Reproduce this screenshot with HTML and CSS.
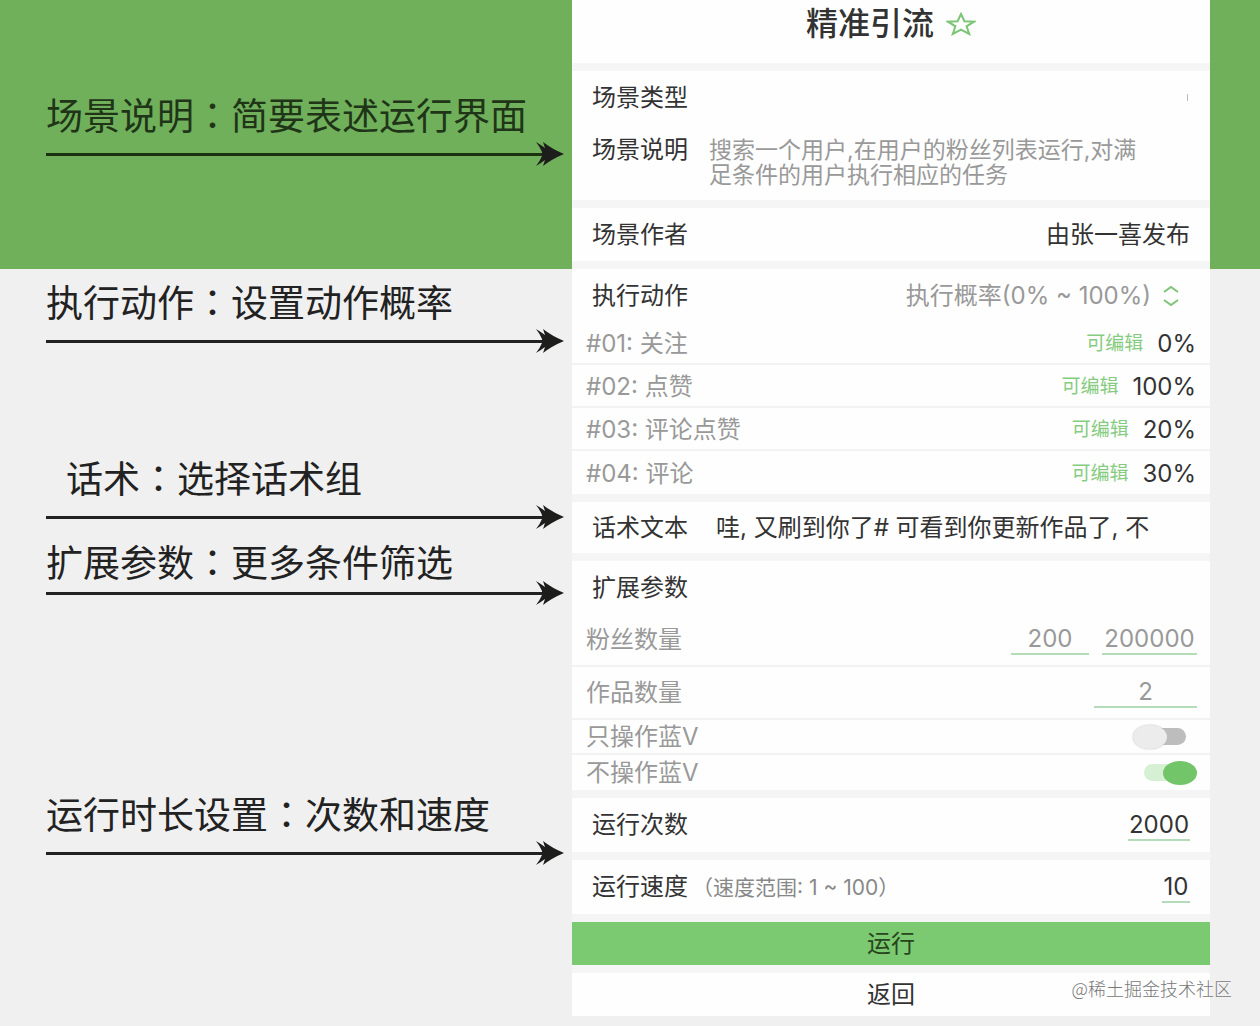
FILE: index.html
```html
<!DOCTYPE html>
<html lang="zh-CN">
<head>
<meta charset="utf-8">
<meta name="viewport" content="width=device-width, initial-scale=1">
<title>精准引流</title>
<link rel="stylesheet" href="styles.css">
</head>
<body>
<svg class="defs" aria-hidden="true">
  <symbol id="head" viewBox="0 0 28 24"><path d="M0 0 Q5 3 9 6 L7 0 Q16 7 28 12 Q16 17 7 24 L9 18 Q5 21 0 24 Q4 19 6 14 V10 Q4 5 0 0Z"/></symbol>
</svg>
<div class="stage">
  <aside class="notes">
    <section class="note note-scene">
      <h2>场景说明<span class="colon" lang="zh-TW">：</span>简要表述运行界面</h2>
      <div class="arrow"><span class="shaft"></span><svg class="head"><use href="#head"/></svg></div>
    </section>
    <section class="note note-action">
      <h2>执行动作<span class="colon" lang="zh-TW">：</span>设置动作概率</h2>
      <div class="arrow"><span class="shaft"></span><svg class="head"><use href="#head"/></svg></div>
    </section>
    <section class="note note-script">
      <h2>话术<span class="colon" lang="zh-TW">：</span>选择话术组</h2>
      <div class="arrow"><span class="shaft"></span><svg class="head"><use href="#head"/></svg></div>
    </section>
    <section class="note note-params">
      <h2>扩展参数<span class="colon" lang="zh-TW">：</span>更多条件筛选</h2>
      <div class="arrow"><span class="shaft"></span><svg class="head"><use href="#head"/></svg></div>
    </section>
    <section class="note note-run">
      <h2>运行时长设置<span class="colon" lang="zh-TW">：</span>次数和速度</h2>
      <div class="arrow"><span class="shaft"></span><svg class="head"><use href="#head"/></svg></div>
    </section>
  </aside>

  <main class="phone">
    <header class="card title">
      <h1>精准引流</h1>
      <svg class="star" viewBox="0 0 30 24"><path d="M15 2 L18.4 9.2 L28 9.7 L20.6 14.3 L23.2 22 L15 17.6 L6.8 22 L9.4 14.3 L2 9.7 L11.6 9.2Z"/></svg>
    </header>

    <section class="card">
      <div class="row"><span class="label">场景类型</span><span class="tick"></span></div>
      <div class="about"><span class="label">场景说明</span><p>搜索一个用户,在用户的粉丝列表运行,对满<br>足条件的用户执行相应的任务</p></div>
    </section>

    <section class="card row"><span class="label">场景作者</span><span class="label">由张一喜发布</span></section>

    <section class="card">
      <div class="row">
        <span class="label">执行动作</span>
        <span class="range">执行概率(0% ~ 100%)
          <svg class="sort" viewBox="0 0 16 20"><path d="M1 6 L8 1 L15 6 M1 14 L8 19 L15 14"/></svg>
        </span>
      </div>
      <ul class="actions">
        <li><span>#01: 关注</span><button type="button"><small>可编辑</small>0%</button></li>
        <li><span>#02: 点赞</span><button type="button"><small>可编辑</small>100%</button></li>
        <li><span>#03: 评论点赞</span><button type="button"><small>可编辑</small>20%</button></li>
        <li><span>#04: 评论</span><button type="button"><small>可编辑</small>30%</button></li>
      </ul>
    </section>

    <section class="card row script"><span class="label">话术文本</span><span class="script-text">哇, 又刷到你了# 可看到你更新作品了, 不</span></section>

    <section class="card">
      <div class="row"><span class="label">扩展参数</span></div>
      <div class="param"><label for="fans-min">粉丝数量</label>
        <span class="pair"><input class="num num-min" id="fans-min" value="200"><input class="num num-max" aria-label="粉丝数量上限" value="200000"></span></div>
      <div class="param"><label for="works">作品数量</label><input class="num num-works" id="works" value="2"></div>
      <div class="param param-switch"><label for="only-v">只操作蓝V</label><input class="switch" type="checkbox" id="only-v"></div>
      <div class="param param-switch"><label for="skip-v">不操作蓝V</label><input class="switch" type="checkbox" id="skip-v" checked></div>
    </section>

    <section class="card row tall"><label class="label" for="times">运行次数</label><input class="num num-times" id="times" value="2000"></section>
    <section class="card row tall"><label class="label" for="speed">运行速度<small class="hint">（速度范围: 1 ~ 100）</small></label><input class="num num-speed" id="speed" value="10"></section>

    <button type="button" class="wide run">运行</button>
    <button type="button" class="wide back">返回</button>
  </main>
  <div class="watermark">@稀土掘金技术社区</div>
</div>
</body>
</html>
```
FILE: styles.css
```css
* { box-sizing: border-box; }

body {
  margin: 0;
  font-family: "Noto Sans CJK SC", sans-serif;
  color: #222;
  background: #f0f0f0;
}

h1, h2, p, ul { margin: 0; padding: 0; }
button, input { font: inherit; color: inherit; border: 0; border-radius: 0; background: none; padding: 0; }
.defs { display: none; }

.stage {
  position: relative;
  display: grid;
  grid-template-columns: 572fr 638fr 50fr;
  min-height: 100vh;
  background: linear-gradient(#70b05b 269px, #f0f0f0 269px);
}

/* annotations */
.notes { padding: 96px 8px 0 46px; min-width: 0; }
.note h2 {
  font-size: 37px;
  line-height: 36px;
  font-weight: 400;
  white-space: nowrap;
}
.colon { font-family: "Noto Sans CJK TC", sans-serif; }
.arrow { display: flex; align-items: center; margin-top: 10px; }
.shaft { flex: 1; height: 3px; margin-right: -8px; background: #222; }
.head { width: 28px; height: 24px; fill: #1d1d1b; }
.note-scene h2 { color: #203518; }
.note-scene .shaft { background: #1c3012; }
.note-action { margin-top: 117px; }
.note-script { margin-top: 106px; }
.note-script h2 { padding-left: 20px; }
.note-params { margin-top: 14px; }
.note-params .arrow { margin-top: 2px; }
.note-run { margin-top: 190px; }

/* phone screen */
.phone {
  align-self: start;
  display: flex;
  flex-direction: column;
  gap: 8px;
  min-width: 0;
  background: #f5f5f5;
  font-family: Inter, "Noto Sans CJK SC", sans-serif;
  font-size: 24px;
  line-height: 24px;
  color: #333;
}
.card { background: #fefefe; }
.title {
  display: flex;
  justify-content: center;
  gap: 12px;
  height: 63px;
  padding-top: 8px;
}
.title h1 { font-size: 32px; line-height: 32px; font-weight: 500; }
.star { width: 30px; height: 24px; margin-top: 4px; fill: none; stroke: #7cc576; stroke-width: 2; }

.row {
  display: flex;
  align-items: center;
  justify-content: space-between;
  min-height: 53px;
  padding: 0 20px;
}
.tall { min-height: 54px; }
.label { white-space: nowrap; }
.tick { width: 1px; height: 7px; margin-right: 2px; background: #bbb; }
.about { display: flex; gap: 21px; padding: 14px 20px 12px; }
.about p { font-size: 23px; line-height: 25px; color: #999; white-space: nowrap; }
.range { display: flex; align-items: center; gap: 12px; padding-right: 11px; color: #999; }
.sort { width: 16px; height: 20px; fill: none; stroke: #7cc576; stroke-width: 2; }

.actions { list-style: none; color: #999; }
.actions li {
  display: flex;
  align-items: center;
  justify-content: space-between;
  height: 43px;
  padding: 2px 14px 0;
  border-bottom: 2px solid #f3f3f3;
}
.actions li:last-child { border-bottom: 0; }
.actions button { display: flex; align-items: center; gap: 14px; color: #333; }
.actions small { font-size: 19px; color: #86cc80; }

.script { min-height: 51px; justify-content: flex-start; gap: 28px; padding-right: 0; overflow: hidden; }
.script-text { white-space: nowrap; }

.param {
  display: flex;
  align-items: center;
  justify-content: space-between;
  height: 53px;
  padding: 0 13px 0 14px;
  color: #999;
  border-bottom: 2px solid #f1f3f1;
}
.param:last-child { border-bottom: 0; }
.param-switch { height: 35px; }
.pair { display: flex; gap: 13px; }
.num { height: 31px; text-align: center; border-bottom: 2px solid #b5dcb9; }
.num-min { width: 78px; }
.num-max { width: 95px; }
.num-works { width: 103px; }
.num-times { width: 62px; }
.num-speed { width: 28px; }
.hint { margin-left: 4px; font-size: 21px; color: #888; }

.switch {
  appearance: none;
  display: flex;
  align-items: center;
  width: 53px;
  height: 24px;
  margin: 0 11px 0 0;
}
.switch::before { content: ""; width: 34px; height: 24px; border-radius: 50%; background: #ececec; box-shadow: 0 0 2px #bbb; z-index: 1; }
.switch::after { content: ""; width: 36px; height: 17px; margin-left: -17px; border-radius: 12px; background: #bdbdbd; }
.switch:checked { flex-direction: row-reverse; margin-right: 0; }
.switch:checked::before { background: #73c56a; box-shadow: none; }
.switch:checked::after { margin: 0 -17px 0 0; background: #d6f0d3; }

.wide { height: 43px; background: #fefefe; }
.run { background: #7bc970; color: #27451f; }

.watermark {
  position: absolute;
  right: 28px;
  bottom: 26px;
  font-size: 18px;
  line-height: 24px;
  font-weight: 300;
  color: #777;
  text-shadow: 0 0 1px #fff;
}
```
